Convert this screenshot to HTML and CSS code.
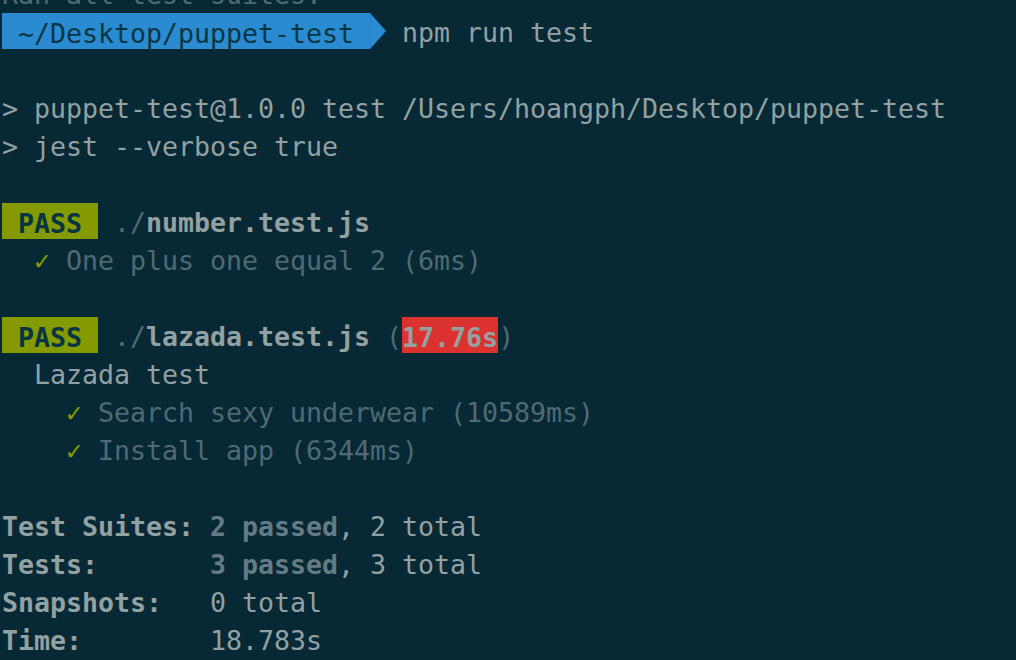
FILE: index.html
```html
<!DOCTYPE html>
<html>
<head>
<meta charset="utf-8">
<link rel="stylesheet" href="styles.css">
</head>
<body>
<div class="term">
<div class="line dim">Ran all test suites.</div>
<div class="line"><span class="prompt"> ~/Desktop/puppet-test </span><span class="arrow"></span> <span class="txt">npm run test</span></div>
<div class="line"> </div>
<div class="line txt">&gt; puppet-test@1.0.0 test /Users/hoangph/Desktop/puppet-test</div>
<div class="line txt">&gt; jest --verbose true</div>
<div class="line"> </div>
<div class="line"><span class="pass"> PASS </span> <span class="dim">./</span><span class="bold">number.test.js</span></div>
<div class="line">  <span class="check">✓</span> <span class="dim">One plus one equal 2 (6ms)</span></div>
<div class="line"> </div>
<div class="line"><span class="pass"> PASS </span> <span class="dim">./</span><span class="bold">lazada.test.js</span> <span class="dim">(</span><span class="slow">17.76s</span><span class="dim">)</span></div>
<div class="line txt">  Lazada test</div>
<div class="line">    <span class="check">✓</span> <span class="dim">Search sexy underwear (10589ms)</span></div>
<div class="line">    <span class="check">✓</span> <span class="dim">Install app (6344ms)</span></div>
<div class="line"> </div>
<div class="line txt"><span class="bold">Test Suites:</span> <span class="passed">2 passed</span>, 2 total</div>
<div class="line txt"><span class="bold">Tests:</span>       <span class="passed">3 passed</span>, 3 total</div>
<div class="line txt"><span class="bold">Snapshots:</span>   0 total</div>
<div class="line txt"><span class="bold">Time:</span>        18.783s</div>
</div>
</body>
</html>
```

FILE: styles.css
```css
html, body {
  margin: 0;
  padding: 0;
  background: #072936;
  overflow: hidden;
}

.term {
  margin-top: -24px;
  padding-left: 2px;
  font-family: "DejaVu Sans Mono", "Liberation Mono", monospace;
  font-size: 26.58px;
  color: #93a1a1;
}

.line {
  white-space: pre;
  height: 38px;
  line-height: 38px;
}

.txt {
  color: #93a1a1;
}

.dim {
  color: #4f6a73;
}

.bold {
  font-weight: bold;
  color: #93a1a1;
}

.prompt {
  background: #2a8bd0;
  color: #073642;
  padding: 4.5px 0 0.5px 0;
}

.arrow {
  display: inline-block;
  width: 16px;
  height: 36px;
  margin-top: -1px;
  vertical-align: top;
  background: #2a8bd0;
  clip-path: polygon(0 0, 100% 50%, 0 100%);
}

.pass {
  background: #859900;
  color: #073642;
  font-weight: bold;
  padding: 4.5px 0 0.5px 0;
}

.slow {
  background: #dc322f;
  color: #93a1a1;
  font-weight: bold;
  padding: 4.5px 0 0.5px 0;
}

.check {
  color: #859900;
}

.passed {
  font-weight: bold;
  color: #657b83;
}
```
